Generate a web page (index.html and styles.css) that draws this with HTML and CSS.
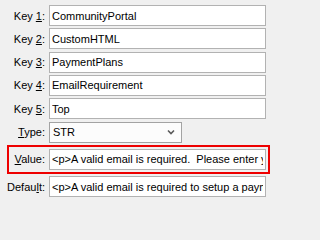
FILE: index.html
```html
<!DOCTYPE html>
<html>
<head>
<meta charset="utf-8">
<link rel="stylesheet" href="styles.css">
</head>
<body>
<div class="form">
  <div class="row">
    <label class="lbl">Key <u>1</u>:</label>
    <input class="edit" type="text" value="CommunityPortal">
  </div>
  <div class="row">
    <label class="lbl">Key <u>2</u>:</label>
    <input class="edit" type="text" value="CustomHTML">
  </div>
  <div class="row">
    <label class="lbl">Key <u>3</u>:</label>
    <input class="edit" type="text" value="PaymentPlans">
  </div>
  <div class="row">
    <label class="lbl">Key <u>4</u>:</label>
    <input class="edit" type="text" value="EmailRequirement">
  </div>
  <div class="row">
    <label class="lbl">Key <u>5</u>:</label>
    <input class="edit" type="text" value="Top">
  </div>
  <div class="row">
    <label class="lbl"><u>T</u>ype:</label>
    <div class="combo">
      <span class="combo-text">STR</span>
      <svg class="chev" width="8" height="6" viewBox="0 0 8 6"><path d="M1 1.5 L4 4.5 L7 1.5" fill="none" stroke="#5a5a5a" stroke-width="1.6"/></svg>
    </div>
  </div>
  <div class="row highlight">
    <label class="lbl lbl-in"><u>V</u>alue:</label>
    <input class="edit" type="text" value="&lt;p&gt;A valid email is required.  Please enter your email address below.&lt;/p&gt;">
  </div>
  <div class="row">
    <label class="lbl">Defau<u>l</u>t:</label>
    <input class="edit" type="text" value="&lt;p&gt;A valid email is required to setup a payment plan.&lt;/p&gt;">
  </div>
</div>
</body>
</html>
```
FILE: styles.css
```css
html, body {
  margin: 0;
  padding: 0;
  background: #f0f0f0;
  width: 271px;
  height: 202px;
  overflow: hidden;
}
.form {
  display: flex;
  flex-direction: column;
  gap: 2.33px;
  padding-top: 5px;
  font-family: "Liberation Sans", Arial, sans-serif;
  font-size: 11px;
  color: #000;
}
.row {
  display: flex;
  align-items: center;
  height: 21px;
}
.lbl {
  width: 45px;
  flex: none;
  text-align: right;
  margin-right: 4px;
  white-space: nowrap;
}
.lbl u {
  text-underline-offset: 1px;
}
.edit {
  box-sizing: border-box;
  width: 217px;
  height: 21px;
  margin: 0;
  padding: 0 2px;
  border: 1px solid #b2b2b2;
  background: #fff;
  font: inherit;
  color: #000;
  outline: none;
}
.combo {
  box-sizing: border-box;
  width: 133px;
  height: 21px;
  border: 1px solid #a3a3a3;
  background: #fcfcfc;
  display: flex;
  align-items: center;
  justify-content: space-between;
  padding: 0 6px 0 3px;
}
.chev {
  display: block;
}
.highlight {
  box-sizing: content-box;
  margin-left: 7px;
  width: 257px;
  border: 2px solid #ee0000;
  padding: 2px 2px 2px 0;
}
.lbl-in {
  width: 36px;
}
```
